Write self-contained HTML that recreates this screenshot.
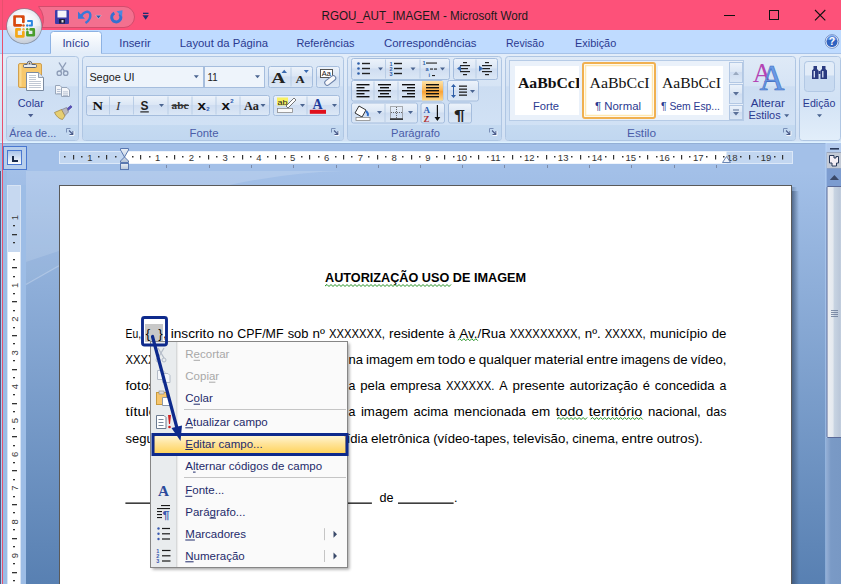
<!DOCTYPE html>
<html><head><meta charset="utf-8"><title>RGOU_AUT_IMAGEM - Microsoft Word</title>
<style>html,body{margin:0;padding:0;width:841px;height:584px;overflow:hidden;background:#A9C5EC;font-family:"Liberation Sans",sans-serif}</style>
</head><body>
<svg width="841" height="584" viewBox="0 0 841 584" style="position:absolute;left:0;top:0"><defs>
<linearGradient id="gRib" x1="0" y1="0" x2="0" y2="1"><stop offset="0" stop-color="#E3EDF9"/><stop offset="1" stop-color="#D2E1F4"/></linearGradient>
<linearGradient id="gGrp" x1="0" y1="0" x2="0" y2="1"><stop offset="0" stop-color="#DFEAF7"/><stop offset=".35" stop-color="#D6E4F5"/><stop offset=".36" stop-color="#CCDDF2"/><stop offset="1" stop-color="#D3E3F6"/></linearGradient>
<linearGradient id="gBand" x1="0" y1="0" x2="0" y2="1"><stop offset="0" stop-color="#C5DAF1"/><stop offset="1" stop-color="#C1D7F0"/></linearGradient>
<linearGradient id="gBtn" x1="0" y1="0" x2="0" y2="1"><stop offset="0" stop-color="#EDF3FB"/><stop offset=".45" stop-color="#DCE7F5"/><stop offset=".5" stop-color="#CFDDF1"/><stop offset="1" stop-color="#DCE8F6"/></linearGradient>
<linearGradient id="gOrg" x1="0" y1="0" x2="0" y2="1"><stop offset="0" stop-color="#FDE3A8"/><stop offset=".45" stop-color="#FBB856"/><stop offset=".55" stop-color="#F9A136"/><stop offset="1" stop-color="#FDDA8E"/></linearGradient>
<linearGradient id="gTab" x1="0" y1="0" x2="0" y2="1"><stop offset="0" stop-color="#FFFFFF"/><stop offset="1" stop-color="#E2ECF8"/></linearGradient>
<linearGradient id="gDoc" x1="0" y1="0" x2="0" y2="1"><stop offset="0" stop-color="#A3C0E8"/><stop offset="1" stop-color="#5880B2"/></linearGradient>
<linearGradient id="gMenuHi" x1="0" y1="0" x2="0" y2="1"><stop offset="0" stop-color="#FFF6D6"/><stop offset=".45" stop-color="#FFE49A"/><stop offset="1" stop-color="#FFD35A"/></linearGradient>
<linearGradient id="gThumb" x1="0" y1="0" x2="1" y2="0"><stop offset="0" stop-color="#EEF0F3"/><stop offset=".4" stop-color="#E4E9EF"/><stop offset=".48" stop-color="#C8D4E2"/><stop offset=".88" stop-color="#BAC7D9"/><stop offset="1" stop-color="#E2E9F2"/></linearGradient>
<radialGradient id="gOB" cx="45%" cy="30%" r="75%"><stop offset="0" stop-color="#FFFFFF"/><stop offset=".55" stop-color="#E8ECF2"/><stop offset="1" stop-color="#BFC7D3"/></radialGradient>
<linearGradient id="gEd" x1="0" y1="0" x2="0" y2="1"><stop offset="0" stop-color="#DCE8F6"/><stop offset=".5" stop-color="#D2E2F5"/><stop offset="1" stop-color="#E2EEFA"/></linearGradient>
<filter id="fsh" x="-10%" y="-10%" width="130%" height="130%"><feGaussianBlur stdDeviation="1.5"/></filter>
</defs>
<rect x="0" y="0" width="841" height="584" fill="#A9C5EC" />
<rect x="0" y="0" width="841" height="30" fill="#FD5179" />
<path d="M38.5 6.5 H124 A10.5 10.5 0 0 1 124 27.5 H42 A22 22 0 0 0 38.5 6.5Z" fill="#F3708F" stroke="#D24C6C" stroke-width="1"/>
<rect x="55" y="10" width="14" height="14" fill="#3B3BA8" rx="1"/>
<rect x="57.5" y="10.5" width="9" height="7" fill="#F4F4FA" />
<rect x="59" y="19" width="6" height="4.5" fill="#1C1C3C" />
<rect x="61.5" y="20" width="2" height="2.5" fill="#DDDDDD" />
<path d="M78 11.5 L78 18.8 L85 18.8Z" fill="#3A78D8"/>
<path d="M81 16.5 C83.5 11.5 89.5 10 90.3 14.5 C90.8 18 88.5 21 85.5 23" fill="none" stroke="#3A78D8" stroke-width="2.4"/>
<path d="M95.7 15.3 H101.3 L98.5 18.8Z" fill="#2C5CA8" stroke="#FFFFFF" stroke-width=".5" stroke-opacity=".6"/>
<path d="M114.4 13.1 A4.6 4.6 0 1 0 119.55 14.05" fill="none" stroke="#3470D0" stroke-width="3"/>
<path d="M116.5 11.2 L122.5 10.3 L122 16.8Z" fill="#4A88E0"/>
<rect x="143" y="12.7" width="5.5" height="1.3" fill="#1F2E70" />
<path d="M142.5 15.3 L148.8 15.3 L145.65 19.8Z" fill="#1F2E70"/>
<text x="321.5" y="19.6" font-size="12" fill="#1A1A1A" font-weight="normal" text-anchor="start" font-family="Liberation Sans" textLength="206.5" lengthAdjust="spacingAndGlyphs" >RGOU_AUT_IMAGEM - Microsoft Word</text>
<rect x="724" y="15" width="11" height="1" fill="#111" />
<rect x="769.5" y="10.5" width="9" height="9" fill="none" stroke="#111" stroke-width="1"/>
<path d="M815 10 L825.3 20.3 M825.3 10 L815 20.3" stroke="#111" stroke-width="1.1"/>
<rect x="0" y="30" width="841" height="24" fill="#BFDBFF" />
<path d="M50.5 54 V34.5 A3 3 0 0 1 53.5 31.5 H98.5 A3 3 0 0 1 101.5 34.5 V54" fill="url(#gTab)" stroke="#8DB2E3" stroke-width="1"/>
<text x="62.4" y="46.7" font-size="11.5" fill="#2A3990" font-weight="normal" text-anchor="start" font-family="Liberation Sans" textLength="26.8" lengthAdjust="spacingAndGlyphs" >Início</text>
<text x="119.3" y="46.7" font-size="11.5" fill="#2A3990" font-weight="normal" text-anchor="start" font-family="Liberation Sans" textLength="31.4" lengthAdjust="spacingAndGlyphs" >Inserir</text>
<text x="179.8" y="46.7" font-size="11.5" fill="#2A3990" font-weight="normal" text-anchor="start" font-family="Liberation Sans" textLength="88.2" lengthAdjust="spacingAndGlyphs" >Layout da Página</text>
<text x="296.4" y="46.7" font-size="11.5" fill="#2A3990" font-weight="normal" text-anchor="start" font-family="Liberation Sans" textLength="58.1" lengthAdjust="spacingAndGlyphs" >Referências</text>
<text x="384" y="46.7" font-size="11.5" fill="#2A3990" font-weight="normal" text-anchor="start" font-family="Liberation Sans" textLength="92.5" lengthAdjust="spacingAndGlyphs" >Correspondências</text>
<text x="506" y="46.7" font-size="11.5" fill="#2A3990" font-weight="normal" text-anchor="start" font-family="Liberation Sans" textLength="38" lengthAdjust="spacingAndGlyphs" >Revisão</text>
<text x="575" y="46.7" font-size="11.5" fill="#2A3990" font-weight="normal" text-anchor="start" font-family="Liberation Sans" textLength="41.2" lengthAdjust="spacingAndGlyphs" >Exibição</text>
<circle cx="832" cy="41.5" r="6.8" fill="#FFFFFF" stroke="#5A7AB8" stroke-width=".8"/>
<circle cx="832" cy="41.5" r="5.6" fill="#2F62C0"/>
<path d="M827 40 A5 5 0 0 1 837 40Z" fill="#6A9AE8" opacity=".7"/>
<text x="832" y="45.3" font-size="10.5" fill="#fff" font-weight="bold" text-anchor="middle" font-family="Liberation Sans" >?</text>
<rect x="0" y="53.5" width="841" height="89" fill="url(#gRib)" />
<rect x="0" y="53" width="51" height="1" fill="#A6C2E8" />
<rect x="101" y="53" width="740" height="1" fill="#A6C2E8" />
<rect x="6.5" y="56.5" width="72.0" height="84.0" rx="3" fill="url(#gGrp)" stroke="#AFC6E3" stroke-width="1"/>
<path d="M7.0 125 H78.0 V137.5 A2.5 2.5 0 0 1 75.5 140.0 H9.5 A2.5 2.5 0 0 1 7.0 137.5Z" fill="url(#gBand)"/>
<text x="9.2" y="137" font-size="11" fill="#4A5CA8" font-weight="normal" text-anchor="start" font-family="Liberation Sans" textLength="47" lengthAdjust="spacingAndGlyphs" >Área de...</text>
<path d="M70.5 128.5 H66.5 V132.5" stroke="#7A90B8" stroke-width="1" fill="none"/>
<path d="M69.0 130.5 L73.0 134.5 M73.0 131 V134.5 H69.5" stroke="#4A5A88" stroke-width="1.1" fill="none"/>
<path d="M74.0 131 V135.5 H69.5" stroke="#FFFFFF" stroke-width="1" fill="none" opacity=".8"/>
<rect x="82.5" y="56.5" width="261.0" height="84.0" rx="3" fill="url(#gGrp)" stroke="#AFC6E3" stroke-width="1"/>
<path d="M83.0 125 H343.0 V137.5 A2.5 2.5 0 0 1 340.5 140.0 H85.5 A2.5 2.5 0 0 1 83.0 137.5Z" fill="url(#gBand)"/>
<text x="189.5" y="137" font-size="11" fill="#4A5CA8" font-weight="normal" text-anchor="start" font-family="Liberation Sans" textLength="29" lengthAdjust="spacingAndGlyphs" >Fonte</text>
<path d="M335.5 128.5 H331.5 V132.5" stroke="#7A90B8" stroke-width="1" fill="none"/>
<path d="M334.0 130.5 L338.0 134.5 M338.0 131 V134.5 H334.5" stroke="#4A5A88" stroke-width="1.1" fill="none"/>
<path d="M339.0 131 V135.5 H334.5" stroke="#FFFFFF" stroke-width="1" fill="none" opacity=".8"/>
<rect x="347.5" y="56.5" width="154.0" height="84.0" rx="3" fill="url(#gGrp)" stroke="#AFC6E3" stroke-width="1"/>
<path d="M348.0 125 H501.0 V137.5 A2.5 2.5 0 0 1 498.5 140.0 H350.5 A2.5 2.5 0 0 1 348.0 137.5Z" fill="url(#gBand)"/>
<text x="391.0" y="137" font-size="11" fill="#4A5CA8" font-weight="normal" text-anchor="start" font-family="Liberation Sans" textLength="49" lengthAdjust="spacingAndGlyphs" >Parágrafo</text>
<path d="M493.5 128.5 H489.5 V132.5" stroke="#7A90B8" stroke-width="1" fill="none"/>
<path d="M492.0 130.5 L496.0 134.5 M496.0 131 V134.5 H492.5" stroke="#4A5A88" stroke-width="1.1" fill="none"/>
<path d="M497.0 131 V135.5 H492.5" stroke="#FFFFFF" stroke-width="1" fill="none" opacity=".8"/>
<rect x="505.5" y="56.5" width="290.0" height="84.0" rx="3" fill="url(#gGrp)" stroke="#AFC6E3" stroke-width="1"/>
<path d="M506.0 125 H795.0 V137.5 A2.5 2.5 0 0 1 792.5 140.0 H508.5 A2.5 2.5 0 0 1 506.0 137.5Z" fill="url(#gBand)"/>
<text x="627" y="137" font-size="11" fill="#4A5CA8" font-weight="normal" text-anchor="start" font-family="Liberation Sans" textLength="29" lengthAdjust="spacingAndGlyphs" >Estilo</text>
<path d="M787.5 128.5 H783.5 V132.5" stroke="#7A90B8" stroke-width="1" fill="none"/>
<path d="M786.0 130.5 L790.0 134.5 M790.0 131 V134.5 H786.5" stroke="#4A5A88" stroke-width="1.1" fill="none"/>
<path d="M791.0 131 V135.5 H786.5" stroke="#FFFFFF" stroke-width="1" fill="none" opacity=".8"/>
<rect x="799.5" y="56.5" width="41.0" height="84.0" rx="3" fill="url(#gGrp)" stroke="#AFC6E3" stroke-width="1"/>
<rect x="800.0" y="57.0" width="40.0" height="83.0" rx="3" fill="url(#gEd)"/>
<rect x="18.5" y="63.5" width="23" height="24" rx="1.5" fill="#F7C86C" stroke="#D0A050" stroke-width="1"/>
<rect x="19.5" y="64.5" width="2" height="22" fill="#FBDA90" />
<circle cx="29.5" cy="63.6" r="2.3" fill="#E8ECF0" stroke="#5A6478" stroke-width="1"/>
<rect x="23.5" y="64.5" width="13" height="3" rx="1" fill="#E8ECF0" stroke="#5A6478" stroke-width="1"/>
<rect x="27.3" y="64.2" width="4.4" height="1.6" fill="#E8ECF0" />
<circle cx="29.5" cy="63.4" r=".9" fill="#6A5030"/>
<path d="M26.5 72.5 H38.5 L43.5 77.5 V90.5 H26.5Z" fill="#FFFFFF" stroke="#7A8AA0" stroke-width="1"/>
<path d="M38.5 72.5 V77.5 H43.5" fill="#DDE4EE" stroke="#7A8AA0" stroke-width=".8"/>
<rect x="29" y="75" width="7" height="1" fill="#C0C8D4" />
<rect x="29" y="77" width="7" height="1" fill="#C0C8D4" />
<rect x="29" y="79" width="7" height="1" fill="#C0C8D4" />
<rect x="29" y="81" width="12" height="1" fill="#C0C8D4" />
<rect x="29" y="83" width="12" height="1" fill="#C0C8D4" />
<rect x="29" y="85" width="12" height="1" fill="#C0C8D4" />
<rect x="29" y="87" width="12" height="1" fill="#C0C8D4" />
<text x="17.7" y="106.7" font-size="11.5" fill="#2A3990" font-weight="normal" text-anchor="start" font-family="Liberation Sans" textLength="26.1" lengthAdjust="spacingAndGlyphs" >Colar</text>
<path d="M28 114 H33.4 L30.7 117.2Z" fill="#4A5E90"/>
<path d="M59 62.5 L65 72 M66 62.5 L60 72" stroke="#8E9DB8" stroke-width="1.4" fill="none"/>
<circle cx="59.3" cy="73.2" r="2.2" fill="none" stroke="#8E9DB8" stroke-width="1.3"/><circle cx="65.7" cy="73.2" r="2.2" fill="none" stroke="#8E9DB8" stroke-width="1.3"/>
<path d="M55.5 85.5 H60 L62 87.5 V94 H55.5Z" fill="#F4F6FA" stroke="#98A6BA" stroke-width="1"/>
<path d="M61.5 87.5 H67 L69.5 90 V96.5 H61.5Z" fill="#F4F6FA" stroke="#98A6BA" stroke-width="1"/>
<rect x="57" y="89" width="3.5" height="0.8" fill="#A8B4C8" />
<rect x="57" y="91" width="3.5" height="0.8" fill="#A8B4C8" />
<rect x="57" y="93" width="3.5" height="0.8" fill="#A8B4C8" />
<rect x="63" y="91.5" width="5" height="0.8" fill="#A8B4C8" />
<rect x="63" y="93.5" width="5" height="0.8" fill="#A8B4C8" />
<rect x="63" y="95" width="5" height="0.8" fill="#A8B4C8" />
<path d="M70.8 105.5 L72 107 L67.5 111 L66 109.5Z" fill="#5A50C0" stroke="#3A3490" stroke-width=".6"/>
<path d="M61 110 L66.5 107.5 L68.5 112 L64.5 116Z" fill="#B8B8C0" stroke="#707080" stroke-width=".6"/>
<path d="M54.5 112.5 L61.5 109.5 L65 116 L62.5 119.5 C59 119 56 116 54.5 112.5Z" fill="#E6CE70" stroke="#9A8040" stroke-width=".7"/>
<rect x="86.5" y="66.5" width="117" height="21" fill="#EEF4FB" stroke="#A5BDDD" stroke-width="1"/>
<rect x="204.5" y="66.5" width="60" height="21" fill="#EEF4FB" stroke="#A5BDDD" stroke-width="1"/>
<text x="89.4" y="80.9" font-size="11.5" fill="#1A1A1A" font-weight="normal" text-anchor="start" font-family="Liberation Sans" textLength="45.2" lengthAdjust="spacingAndGlyphs" >Segoe UI</text>
<text x="207.5" y="80.9" font-size="11.5" fill="#1A1A1A" font-weight="normal" text-anchor="start" font-family="Liberation Sans" textLength="10.1" lengthAdjust="spacingAndGlyphs" >11</text>
<path d="M193.8 75.2 H198.8 L196.3 78.2Z" fill="#4A6490"/>
<path d="M255 75.2 H260 L257.5 78.2Z" fill="#4A6490"/>
<rect x="268.5" y="66.5" width="44.0" height="21.0" rx="2" fill="url(#gBtn)" stroke="#A5BDDD" stroke-width="1"/>
<rect x="290.5" y="67.5" width="1" height="19.0" fill="#B9CDE6" />
<text x="271.3" y="83.2" font-size="15.5" fill="#222" font-weight="bold" text-anchor="start" font-family="Liberation Serif" textLength="14.2" lengthAdjust="spacingAndGlyphs" >A</text>
<path d="M281.5 73 L284.2 69.8 L287 73Z" fill="#3A6AB0"/>
<text x="295.5" y="83.2" font-size="11" fill="#222" font-weight="bold" text-anchor="start" font-family="Liberation Serif" textLength="9.3" lengthAdjust="spacingAndGlyphs" >A</text>
<path d="M303.8 70 H308.8 L306.3 73Z" fill="#3A6AB0"/>
<rect x="316.5" y="66.5" width="23.0" height="21.0" rx="2" fill="url(#gBtn)" stroke="#A5BDDD" stroke-width="1"/>
<rect x="320.5" y="69.5" width="12" height="8" fill="#fff" stroke="#444" stroke-width=".9"/>
<text x="321.8" y="76.3" font-size="7" fill="#111" font-weight="normal" text-anchor="start" font-family="Liberation Sans" textLength="9" lengthAdjust="spacingAndGlyphs" >Aa</text>
<rect x="324" y="78" width="12.5" height="5" rx="2.3" fill="#F8F8FA" stroke="#6A80A8" stroke-width="1" transform="rotate(-38 330.2 80.5)"/>
<rect x="86.5" y="95.5" width="183.0" height="20.0" rx="2" fill="url(#gBtn)" stroke="#A5BDDD" stroke-width="1"/>
<rect x="109" y="96.5" width="1" height="18.0" fill="#B9CDE6" />
<rect x="133" y="96.5" width="1" height="18.0" fill="#B9CDE6" />
<rect x="167.5" y="96.5" width="1" height="18.0" fill="#B9CDE6" />
<rect x="191.5" y="96.5" width="1" height="18.0" fill="#B9CDE6" />
<rect x="215.5" y="96.5" width="1" height="18.0" fill="#B9CDE6" />
<rect x="239.5" y="96.5" width="1" height="18.0" fill="#B9CDE6" />
<text x="92.5" y="109.6" font-size="12.5" fill="#111" font-weight="bold" text-anchor="start" font-family="Liberation Serif" textLength="10.5" lengthAdjust="spacingAndGlyphs" >N</text>
<text x="116" y="109.6" font-size="13" fill="#333" font-weight="normal" text-anchor="start" font-family="Liberation Serif" font-style="italic">I</text>
<text x="140.5" y="109.6" font-size="12.5" fill="#222" font-weight="bold" text-anchor="start" font-family="Liberation Sans" textLength="8" lengthAdjust="spacingAndGlyphs" >S</text>
<rect x="140.3" y="111.3" width="8.5" height="1.2" fill="#222" />
<path d="M159 104 H164 L161.5 107Z" fill="#4A6490"/>
<text x="171.5" y="109.3" font-size="10.5" fill="#333" font-weight="bold" text-anchor="start" font-family="Liberation Serif" textLength="17" lengthAdjust="spacingAndGlyphs" >abc</text>
<rect x="171.5" y="105" width="17.5" height="1" fill="#333" />
<text x="197.5" y="109.6" font-size="13" fill="#111" font-weight="bold" text-anchor="start" font-family="Liberation Sans" textLength="8.5" lengthAdjust="spacingAndGlyphs" >x</text>
<text x="206.3" y="111.2" font-size="6" fill="#2A5AB0" font-weight="bold" text-anchor="start" font-family="Liberation Sans" >2</text>
<text x="221.5" y="109.6" font-size="13" fill="#111" font-weight="bold" text-anchor="start" font-family="Liberation Sans" textLength="8.5" lengthAdjust="spacingAndGlyphs" >x</text>
<text x="230.3" y="102.5" font-size="6" fill="#2A5AB0" font-weight="bold" text-anchor="start" font-family="Liberation Sans" >2</text>
<text x="244" y="110" font-size="12" fill="#222" font-weight="bold" text-anchor="start" font-family="Liberation Serif" textLength="15" lengthAdjust="spacingAndGlyphs" >Aa</text>
<path d="M260.5 104 H265.5 L263.0 107Z" fill="#4A6490"/>
<rect x="273.5" y="95.5" width="66.0" height="20.0" rx="2" fill="url(#gBtn)" stroke="#A5BDDD" stroke-width="1"/>
<rect x="306.5" y="96.5" width="1" height="18.0" fill="#B9CDE6" />
<rect x="277" y="97.5" width="11" height="8" fill="#F8F060" />
<text x="277.5" y="104.5" font-size="8" fill="#222" font-weight="normal" text-anchor="start" font-family="Liberation Sans" textLength="10" lengthAdjust="spacingAndGlyphs" >ab</text>
<path d="M286 106 L294 98 L296 100 L288 108Z" fill="#fff" stroke="#555" stroke-width=".8"/>
<rect x="277.5" y="108.5" width="15" height="4" fill="#FAFAFA" stroke="#8A8A8A" stroke-width=".8"/>
<path d="M300 104 H305 L302.5 107Z" fill="#4A6490"/>
<text x="312.5" y="108.5" font-size="14" fill="#1E3C9C" font-weight="bold" text-anchor="start" font-family="Liberation Serif" >A</text>
<rect x="309.8" y="109.8" width="16.2" height="4" fill="#E0101C" />
<path d="M332 104 H337 L334.5 107Z" fill="#4A6490"/>
<rect x="351.5" y="58.5" width="98.0" height="21.0" rx="2" fill="url(#gBtn)" stroke="#A5BDDD" stroke-width="1"/>
<rect x="385" y="59.5" width="1" height="19.0" fill="#B9CDE6" />
<rect x="419.5" y="59.5" width="1" height="19.0" fill="#B9CDE6" />
<rect x="453.5" y="58.5" width="44.0" height="21.0" rx="2" fill="url(#gBtn)" stroke="#A5BDDD" stroke-width="1"/>
<rect x="475.5" y="59.5" width="1" height="19.0" fill="#B9CDE6" />
<rect x="351.5" y="80.5" width="91.5" height="20.5" rx="2" fill="url(#gBtn)" stroke="#A5BDDD" stroke-width="1"/>
<rect x="373.5" y="81.5" width="1" height="18.5" fill="#B9CDE6" />
<rect x="397.5" y="81.5" width="1" height="18.5" fill="#B9CDE6" />
<rect x="422" y="81" width="21" height="19.5" fill="url(#gOrg)"/>
<rect x="447.5" y="80.5" width="31.0" height="20.5" rx="2" fill="url(#gBtn)" stroke="#A5BDDD" stroke-width="1"/>
<rect x="351.5" y="103" width="66.0" height="20" rx="2" fill="url(#gBtn)" stroke="#A5BDDD" stroke-width="1"/>
<rect x="384.5" y="104" width="1" height="18" fill="#B9CDE6" />
<rect x="421" y="103" width="23.5" height="20" rx="2" fill="url(#gBtn)" stroke="#A5BDDD" stroke-width="1"/>
<rect x="448.5" y="103" width="23.0" height="20" rx="2" fill="url(#gBtn)" stroke="#A5BDDD" stroke-width="1"/>
<circle cx="358.5" cy="63.5" r="1.3" fill="#2F5FA8"/>
<rect x="362" y="62.8" width="8" height="1.4" fill="#222" />
<circle cx="358.5" cy="68.5" r="1.3" fill="#2F5FA8"/>
<rect x="362" y="67.8" width="8" height="1.4" fill="#222" />
<circle cx="358.5" cy="73.5" r="1.3" fill="#2F5FA8"/>
<rect x="362" y="72.8" width="8" height="1.4" fill="#222" />
<path d="M378 67.5 H383 L380.5 70.5Z" fill="#4A6490"/>
<text x="389.5" y="65.8" font-size="5.5" fill="#2F5FA8" font-weight="bold" text-anchor="start" font-family="Liberation Sans" >1</text>
<rect x="394" y="62.8" width="8" height="1.4" fill="#222" />
<text x="389.5" y="70.8" font-size="5.5" fill="#2F5FA8" font-weight="bold" text-anchor="start" font-family="Liberation Sans" >2</text>
<rect x="394" y="67.8" width="8" height="1.4" fill="#222" />
<text x="389.5" y="75.8" font-size="5.5" fill="#2F5FA8" font-weight="bold" text-anchor="start" font-family="Liberation Sans" >3</text>
<rect x="394" y="72.8" width="8" height="1.4" fill="#222" />
<path d="M410.5 67.5 H415.5 L413.0 70.5Z" fill="#4A6490"/>
<text x="422.5" y="64.5" font-size="5.5" fill="#2F5FA8" font-weight="bold" text-anchor="start" font-family="Liberation Sans" >1</text>
<rect x="426" y="62.5" width="11" height="1.1" fill="#222" />
<text x="425.5" y="70.5" font-size="5.5" fill="#2F5FA8" font-weight="bold" text-anchor="start" font-family="Liberation Sans" >a</text>
<rect x="430" y="68.5" width="3" height="1.1" fill="#222" />
<rect x="434" y="68.5" width="3" height="1.1" fill="#222" />
<text x="428.5" y="77" font-size="5.5" fill="#2F5FA8" font-weight="bold" text-anchor="start" font-family="Liberation Sans" >i</text>
<rect x="432" y="75" width="3" height="1.1" fill="#222" />
<path d="M440 67.5 H445 L442.5 70.5Z" fill="#4A6490"/>
<rect x="463" y="62" width="4" height="1.2" fill="#222" />
<rect x="460" y="65" width="10" height="1.2" fill="#222" />
<rect x="460" y="68" width="8" height="1.2" fill="#222" />
<rect x="460" y="71" width="10" height="1.2" fill="#222" />
<rect x="463" y="74" width="4" height="1.2" fill="#222" />
<path d="M457 68.5 L461 65.5 V71.5Z" fill="#3A6AB0"/>
<rect x="485" y="62" width="4" height="1.2" fill="#222" />
<rect x="482" y="65" width="10" height="1.2" fill="#222" />
<rect x="482" y="68" width="8" height="1.2" fill="#222" />
<rect x="482" y="71" width="10" height="1.2" fill="#222" />
<rect x="485" y="74" width="4" height="1.2" fill="#222" />
<path d="M483 68.5 L479 65.5 V71.5Z" fill="#3A6AB0"/>
<rect x="356.5" y="84" width="13" height="1.4" fill="#111" />
<rect x="356.5" y="87" width="8" height="1.4" fill="#111" />
<rect x="356.5" y="90" width="13" height="1.4" fill="#111" />
<rect x="356.5" y="93" width="8" height="1.4" fill="#111" />
<rect x="356.5" y="96" width="13" height="1.4" fill="#111" />
<rect x="378.0" y="84" width="13" height="1.4" fill="#111" />
<rect x="380.0" y="87" width="9" height="1.4" fill="#111" />
<rect x="378.0" y="90" width="13" height="1.4" fill="#111" />
<rect x="380.0" y="93" width="9" height="1.4" fill="#111" />
<rect x="378.0" y="96" width="13" height="1.4" fill="#111" />
<rect x="402" y="84" width="13" height="1.4" fill="#111" />
<rect x="407" y="87" width="8" height="1.4" fill="#111" />
<rect x="402" y="90" width="13" height="1.4" fill="#111" />
<rect x="407" y="93" width="8" height="1.4" fill="#111" />
<rect x="402" y="96" width="13" height="1.4" fill="#111" />
<rect x="426" y="84" width="13" height="1.4" fill="#111" />
<rect x="426" y="87" width="13" height="1.4" fill="#111" />
<rect x="426" y="90" width="13" height="1.4" fill="#111" />
<rect x="426" y="93" width="13" height="1.4" fill="#111" />
<rect x="426" y="96" width="13" height="1.4" fill="#111" />
<path d="M453.5 84 L451 87 H456Z M453.5 98 L451 95 H456Z" fill="#2F5FA8"/>
<rect x="453" y="86" width="1" height="10" fill="#2F5FA8" />
<rect x="459" y="85.5" width="8" height="1.3" fill="#222" />
<rect x="459" y="88.5" width="8" height="1.3" fill="#222" />
<rect x="459" y="91.5" width="8" height="1.3" fill="#222" />
<rect x="459" y="94.5" width="8" height="1.3" fill="#222" />
<path d="M470 90 H475 L472.5 93Z" fill="#4A6490"/>
<path d="M359 106 L366 110 L362 117 L355 113Z" fill="#fff" stroke="#333" stroke-width="1"/>
<path d="M366 111 Q369 114 367.5 116" stroke="#2F6CC8" stroke-width="2" fill="none"/>
<rect x="356" y="117.5" width="14" height="3" fill="#fff" stroke="#8A8A8A" stroke-width=".8"/>
<path d="M377 111 H382 L379.5 114Z" fill="#4A6490"/>
<rect x="390.5" y="106.5" width="12" height="12" fill="none" stroke="#666" stroke-width="1" stroke-dasharray="1 1"/>
<path d="M396.5 107 V118 M391 112.5 H402" stroke="#666" stroke-width="1" stroke-dasharray="1 1"/>
<rect x="390" y="118.5" width="13" height="1.3" fill="#111" />
<path d="M408 111 H413 L410.5 114Z" fill="#4A6490"/>
<text x="423.5" y="113" font-size="9" fill="#2A5AB0" font-weight="bold" text-anchor="start" font-family="Liberation Serif" >A</text>
<text x="423.5" y="121.8" font-size="9" fill="#B03030" font-weight="bold" text-anchor="start" font-family="Liberation Serif" >Z</text>
<rect x="436.8" y="105" width="1.2" height="15" fill="#111" />
<path d="M434.5 117 L437.4 121 L440.3 117Z" fill="#111"/>
<text x="454" y="119.5" font-size="14" fill="#222" font-weight="bold" text-anchor="start" font-family="Liberation Sans" textLength="11" lengthAdjust="spacingAndGlyphs" >¶</text>
<rect x="509.5" y="60.5" width="234" height="60" fill="#EAF1FA" stroke="#B6CBE6" stroke-width="1"/>
<rect x="515" y="66" width="64" height="49" fill="#FFFFFF" />
<rect x="583" y="63" width="72" height="55" rx="2" fill="#FFFFFF" stroke="#F0B050" stroke-width="2"/>
<rect x="585.5" y="65.5" width="67" height="50" fill="none" stroke="#FFE8B0" stroke-width="1.5"/>
<clipPath id="cpF"><rect x="515" y="60" width="64" height="60"/></clipPath>
<rect x="658" y="66" width="65" height="49" fill="#FFFFFF" />
<text x="518" y="87.5" font-size="14" fill="#111" font-weight="bold" text-anchor="start" font-family="Liberation Serif" textLength="63" lengthAdjust="spacingAndGlyphs" clip-path="url(#cpF)">AaBbCcI</text>
<text x="533" y="109.5" font-size="11.5" fill="#2A3990" font-weight="normal" text-anchor="start" font-family="Liberation Sans" textLength="26" lengthAdjust="spacingAndGlyphs" >Forte</text>
<text x="589.5" y="87.5" font-size="14" fill="#111" font-weight="normal" text-anchor="start" font-family="Liberation Serif" textLength="60" lengthAdjust="spacingAndGlyphs" >AaBbCcI</text>
<text x="595" y="109.5" font-size="11.5" fill="#2A3990" font-weight="normal" text-anchor="start" font-family="Liberation Sans" textLength="46" lengthAdjust="spacingAndGlyphs" >¶ Normal</text>
<text x="662" y="87.5" font-size="14" fill="#111" font-weight="normal" text-anchor="start" font-family="Liberation Serif" textLength="59" lengthAdjust="spacingAndGlyphs" >AaBbCcI</text>
<text x="661" y="109.5" font-size="11.5" fill="#2A3990" font-weight="normal" text-anchor="start" font-family="Liberation Sans" textLength="59" lengthAdjust="spacingAndGlyphs" >¶ Sem Esp...</text>
<rect x="729.5" y="62.5" width="13" height="20" fill="url(#gBtn)" stroke="#B3C8E4" stroke-width="1"/>
<rect x="729.5" y="84.5" width="13" height="19" fill="url(#gBtn)" stroke="#B3C8E4" stroke-width="1"/>
<rect x="729.5" y="105.5" width="13" height="14" fill="url(#gBtn)" stroke="#B3C8E4" stroke-width="1"/>
<path d="M733 75 H739 L736 71.5Z" fill="#9AAAC0"/>
<path d="M733 92 H739 L736 95.5Z" fill="#5A7098"/>
<rect x="733" y="109.5" width="6" height="1" fill="#5A7098" />
<path d="M733 112 H739 L736 115.5Z" fill="#5A7098"/>
<text x="752.8" y="81.5" font-size="27" fill="#B444B4" font-weight="normal" text-anchor="start" font-family="Liberation Serif" textLength="19" lengthAdjust="spacingAndGlyphs" >A</text>
<text x="759.5" y="89.6" font-size="36.5" fill="#6A9AE6" font-weight="normal" text-anchor="start" font-family="Liberation Serif" textLength="25" lengthAdjust="spacingAndGlyphs" stroke="#3A6CC0" stroke-width=".6">A</text>
<text x="750.8" y="106.8" font-size="11.5" fill="#2A3990" font-weight="normal" text-anchor="start" font-family="Liberation Sans" textLength="34.1" lengthAdjust="spacingAndGlyphs" >Alterar</text>
<text x="748.4" y="119.1" font-size="11.5" fill="#2A3990" font-weight="normal" text-anchor="start" font-family="Liberation Sans" textLength="32.3" lengthAdjust="spacingAndGlyphs" >Estilos</text>
<path d="M784.2 114.2 H789.2 L786.7 117.2Z" fill="#4A6490"/>
<rect x="804.5" y="61.5" width="30" height="30" rx="3" fill="#C9DBF1" stroke="#B2C8E4" stroke-width="1"/>
<path d="M805 64.5 A3 3 0 0 1 808 62 H831 A3 3 0 0 1 834 64.5 V75.5 H805Z" fill="#E2ECF8"/>
<path d="M813.5 66 h3.5 v3 l1.5 1.5 v8.5 h-6.5 v-8.5 l1.5 -1.5Z M822 66 h3.5 v3 l1.5 1.5 v8.5 h-6.5 v-8.5 l1.5 -1.5Z" fill="#2A3A80"/>
<rect x="818.5" y="71" width="2" height="3" fill="#2A3A80" />
<path d="M814.3 71 v6.5 M822.8 71 v6.5" stroke="#DDE6F8" stroke-width="1.3"/>
<text x="802.8" y="107" font-size="11.5" fill="#2A3990" font-weight="normal" text-anchor="start" font-family="Liberation Sans" textLength="32.5" lengthAdjust="spacingAndGlyphs" >Edição</text>
<path d="M817 114.2 H822 L819.5 117.2Z" fill="#4A6490"/>
<rect x="0" y="143" width="841" height="28" fill="#A3C0E8" />
<rect x="0" y="141.5" width="841" height="1.5" fill="#DDF2FF" />
<rect x="0" y="143" width="841" height="1" fill="#93AFD6" />
<rect x="2" y="0" width="1" height="584" fill="#E8506E" />
<linearGradient id="gTS" x1="0" y1="0" x2="0" y2="1"><stop offset="0" stop-color="#A8C3E8"/><stop offset="1" stop-color="#FFFFFF"/></linearGradient>
<rect x="3.5" y="146.5" width="23" height="23" fill="#B8CFEC" stroke="#4A78D0" stroke-width="1"/>
<rect x="7.5" y="150.5" width="14" height="14" fill="url(#gTS)" stroke="#4A78D0" stroke-width="1"/>
<rect x="12" y="156" width="2" height="6" fill="#1A2A48" />
<rect x="12" y="160" width="6" height="2" fill="#1A2A48" />
<rect x="59" y="151" width="734" height="13" fill="#C2D6F0" />
<rect x="59.5" y="151.5" width="733" height="12" fill="none" stroke="#DCE8F8" stroke-width="1"/>
<rect x="124.5" y="151.5" width="602" height="12" fill="#FFFFFF" />
<rect x="64" y="156" width="1.5" height="1.5" fill="#333" />
<rect x="73" y="155" width="1.2" height="4.5" fill="#333" />
<rect x="81" y="156" width="1.5" height="1.5" fill="#333" />
<text x="89.95" y="160.5" font-size="9.5" fill="#333333" font-weight="normal" text-anchor="middle" font-family="Liberation Sans" >1</text>
<rect x="98" y="156" width="1.5" height="1.5" fill="#333" />
<rect x="106" y="155" width="1.2" height="4.5" fill="#333" />
<rect x="115" y="156" width="1.5" height="1.5" fill="#333" />
<rect x="132" y="156" width="1.5" height="1.5" fill="#333" />
<rect x="140" y="155" width="1.2" height="4.5" fill="#333" />
<rect x="149" y="156" width="1.5" height="1.5" fill="#333" />
<text x="157.55" y="160.5" font-size="9.5" fill="#333333" font-weight="normal" text-anchor="middle" font-family="Liberation Sans" >1</text>
<rect x="166" y="156" width="1.5" height="1.5" fill="#333" />
<rect x="174" y="155" width="1.2" height="4.5" fill="#333" />
<rect x="182" y="156" width="1.5" height="1.5" fill="#333" />
<text x="191.35" y="160.5" font-size="9.5" fill="#333333" font-weight="normal" text-anchor="middle" font-family="Liberation Sans" >2</text>
<rect x="199" y="156" width="1.5" height="1.5" fill="#333" />
<rect x="208" y="155" width="1.2" height="4.5" fill="#333" />
<rect x="216" y="156" width="1.5" height="1.5" fill="#333" />
<text x="225.14999999999998" y="160.5" font-size="9.5" fill="#333333" font-weight="normal" text-anchor="middle" font-family="Liberation Sans" >3</text>
<rect x="233" y="156" width="1.5" height="1.5" fill="#333" />
<rect x="242" y="155" width="1.2" height="4.5" fill="#333" />
<rect x="250" y="156" width="1.5" height="1.5" fill="#333" />
<text x="258.95" y="160.5" font-size="9.5" fill="#333333" font-weight="normal" text-anchor="middle" font-family="Liberation Sans" >4</text>
<rect x="267" y="156" width="1.5" height="1.5" fill="#333" />
<rect x="275" y="155" width="1.2" height="4.5" fill="#333" />
<rect x="284" y="156" width="1.5" height="1.5" fill="#333" />
<text x="292.75" y="160.5" font-size="9.5" fill="#333333" font-weight="normal" text-anchor="middle" font-family="Liberation Sans" >5</text>
<rect x="301" y="156" width="1.5" height="1.5" fill="#333" />
<rect x="309" y="155" width="1.2" height="4.5" fill="#333" />
<rect x="318" y="156" width="1.5" height="1.5" fill="#333" />
<text x="326.54999999999995" y="160.5" font-size="9.5" fill="#333333" font-weight="normal" text-anchor="middle" font-family="Liberation Sans" >6</text>
<rect x="335" y="156" width="1.5" height="1.5" fill="#333" />
<rect x="343" y="155" width="1.2" height="4.5" fill="#333" />
<rect x="351" y="156" width="1.5" height="1.5" fill="#333" />
<text x="360.34999999999997" y="160.5" font-size="9.5" fill="#333333" font-weight="normal" text-anchor="middle" font-family="Liberation Sans" >7</text>
<rect x="368" y="156" width="1.5" height="1.5" fill="#333" />
<rect x="377" y="155" width="1.2" height="4.5" fill="#333" />
<rect x="385" y="156" width="1.5" height="1.5" fill="#333" />
<text x="394.15" y="160.5" font-size="9.5" fill="#333333" font-weight="normal" text-anchor="middle" font-family="Liberation Sans" >8</text>
<rect x="402" y="156" width="1.5" height="1.5" fill="#333" />
<rect x="411" y="155" width="1.2" height="4.5" fill="#333" />
<rect x="419" y="156" width="1.5" height="1.5" fill="#333" />
<text x="427.95" y="160.5" font-size="9.5" fill="#333333" font-weight="normal" text-anchor="middle" font-family="Liberation Sans" >9</text>
<rect x="436" y="156" width="1.5" height="1.5" fill="#333" />
<rect x="444" y="155" width="1.2" height="4.5" fill="#333" />
<rect x="453" y="156" width="1.5" height="1.5" fill="#333" />
<text x="461.75" y="160.5" font-size="9.5" fill="#333333" font-weight="normal" text-anchor="middle" font-family="Liberation Sans" >10</text>
<rect x="470" y="156" width="1.5" height="1.5" fill="#333" />
<rect x="478" y="155" width="1.2" height="4.5" fill="#333" />
<rect x="487" y="156" width="1.5" height="1.5" fill="#333" />
<text x="495.54999999999995" y="160.5" font-size="9.5" fill="#333333" font-weight="normal" text-anchor="middle" font-family="Liberation Sans" >11</text>
<rect x="503" y="156" width="1.5" height="1.5" fill="#333" />
<rect x="512" y="155" width="1.2" height="4.5" fill="#333" />
<rect x="520" y="156" width="1.5" height="1.5" fill="#333" />
<text x="529.3499999999999" y="160.5" font-size="9.5" fill="#333333" font-weight="normal" text-anchor="middle" font-family="Liberation Sans" >12</text>
<rect x="537" y="156" width="1.5" height="1.5" fill="#333" />
<rect x="546" y="155" width="1.2" height="4.5" fill="#333" />
<rect x="554" y="156" width="1.5" height="1.5" fill="#333" />
<text x="563.15" y="160.5" font-size="9.5" fill="#333333" font-weight="normal" text-anchor="middle" font-family="Liberation Sans" >13</text>
<rect x="571" y="156" width="1.5" height="1.5" fill="#333" />
<rect x="580" y="155" width="1.2" height="4.5" fill="#333" />
<rect x="588" y="156" width="1.5" height="1.5" fill="#333" />
<text x="596.9499999999999" y="160.5" font-size="9.5" fill="#333333" font-weight="normal" text-anchor="middle" font-family="Liberation Sans" >14</text>
<rect x="605" y="156" width="1.5" height="1.5" fill="#333" />
<rect x="613" y="155" width="1.2" height="4.5" fill="#333" />
<rect x="622" y="156" width="1.5" height="1.5" fill="#333" />
<text x="630.75" y="160.5" font-size="9.5" fill="#333333" font-weight="normal" text-anchor="middle" font-family="Liberation Sans" >15</text>
<rect x="639" y="156" width="1.5" height="1.5" fill="#333" />
<rect x="647" y="155" width="1.2" height="4.5" fill="#333" />
<rect x="656" y="156" width="1.5" height="1.5" fill="#333" />
<text x="664.55" y="160.5" font-size="9.5" fill="#333333" font-weight="normal" text-anchor="middle" font-family="Liberation Sans" >16</text>
<rect x="673" y="156" width="1.5" height="1.5" fill="#333" />
<rect x="681" y="155" width="1.2" height="4.5" fill="#333" />
<rect x="689" y="156" width="1.5" height="1.5" fill="#333" />
<text x="698.3499999999999" y="160.5" font-size="9.5" fill="#333333" font-weight="normal" text-anchor="middle" font-family="Liberation Sans" >17</text>
<rect x="706" y="156" width="1.5" height="1.5" fill="#333" />
<rect x="715" y="155" width="1.2" height="4.5" fill="#333" />
<rect x="723" y="156" width="1.5" height="1.5" fill="#333" />
<text x="732.15" y="160.5" font-size="9.5" fill="#333333" font-weight="normal" text-anchor="middle" font-family="Liberation Sans" >18</text>
<rect x="740" y="156" width="1.5" height="1.5" fill="#333" />
<rect x="749" y="155" width="1.2" height="4.5" fill="#333" />
<rect x="757" y="156" width="1.5" height="1.5" fill="#333" />
<text x="765.9499999999999" y="160.5" font-size="9.5" fill="#333333" font-weight="normal" text-anchor="middle" font-family="Liberation Sans" >19</text>
<rect x="774" y="156" width="1.5" height="1.5" fill="#333" />
<rect x="782" y="155" width="1.2" height="4.5" fill="#333" />
<rect x="166" y="165" width="1" height="3" fill="#7A8AA8" />
<rect x="209" y="165" width="1" height="3" fill="#7A8AA8" />
<rect x="251" y="165" width="1" height="3" fill="#7A8AA8" />
<rect x="293" y="165" width="1" height="3" fill="#7A8AA8" />
<rect x="336" y="165" width="1" height="3" fill="#7A8AA8" />
<rect x="378" y="165" width="1" height="3" fill="#7A8AA8" />
<rect x="420" y="165" width="1" height="3" fill="#7A8AA8" />
<rect x="462" y="165" width="1" height="3" fill="#7A8AA8" />
<rect x="504" y="165" width="1" height="3" fill="#7A8AA8" />
<rect x="547" y="165" width="1" height="3" fill="#7A8AA8" />
<rect x="589" y="165" width="1" height="3" fill="#7A8AA8" />
<rect x="631" y="165" width="1" height="3" fill="#7A8AA8" />
<rect x="674" y="165" width="1" height="3" fill="#7A8AA8" />
<rect x="716" y="165" width="1" height="3" fill="#7A8AA8" />
<linearGradient id="gIM" x1="0" y1="0" x2="0" y2="1"><stop offset="0" stop-color="#E8EEF6"/><stop offset="1" stop-color="#B8C6D8"/></linearGradient>
<path d="M120.5 148.5 H128.5 V150 L124.5 157 L120.5 150Z M124.5 157 L128.5 161 V162.5 H120.5 V161Z" fill="url(#gIM)" stroke="#5A78B0" stroke-width="1"/>
<rect x="120.5" y="163.5" width="8" height="6" fill="url(#gIM)" stroke="#5A78B0" stroke-width="1"/>
<path d="M722.5 162.5 L726.5 156.5 L730.5 162.5Z" fill="#F2F6FC" stroke="#6A86B4" stroke-width="1"/>
<rect x="0" y="171" width="827" height="413" fill="url(#gDoc)" />
<rect x="2" y="0" width="1" height="584" fill="#E8506E" />
<rect x="0" y="171" width="1" height="413" fill="#4A5A8A" />
<rect x="1" y="171" width="1" height="413" fill="#B4CDEE" />
<rect x="3" y="171" width="4" height="413" fill="#9BBCE6" />
<rect x="21" y="185" width="5" height="399" fill="#9DBDE6" />
<path d="M26 171 V262 L59 251 Q150 207 229.5 185 Q290 172 345 171Z" fill="#FFFFFF" opacity=".16"/>
<path d="M26 284.5 L59 265.8" stroke="#FFFFFF" stroke-width="1.2" opacity=".25"/>
<path d="M26 262 L59 251 V265.8 L26 284.5Z" fill="#FFFFFF" opacity=".05"/>
<rect x="7" y="185" width="14" height="399" fill="#FFFFFF" />
<rect x="7" y="185" width="14" height="67" fill="#C6D8F0" />
<rect x="7.5" y="185.5" width="13" height="400" fill="none" stroke="#D8E4F4" stroke-width="1"/>
<text x="0" y="0" font-size="9.5" fill="#3A3A3A" text-anchor="middle" font-family="Liberation Sans" transform="translate(17.5 217.7) rotate(-90)">1</text>
<rect x="13" y="225" width="2" height="1.3" fill="#333" />
<rect x="12" y="234" width="5" height="1.3" fill="#333" />
<rect x="13" y="242" width="2" height="1.3" fill="#333" />
<rect x="13" y="259" width="2" height="1.3" fill="#333" />
<rect x="12" y="267" width="5" height="1.3" fill="#333" />
<rect x="13" y="276" width="2" height="1.3" fill="#333" />
<text x="0" y="0" font-size="9.5" fill="#3A3A3A" text-anchor="middle" font-family="Liberation Sans" transform="translate(17.5 285.3) rotate(-90)">1</text>
<rect x="13" y="293" width="2" height="1.3" fill="#333" />
<rect x="12" y="301" width="5" height="1.3" fill="#333" />
<rect x="13" y="310" width="2" height="1.3" fill="#333" />
<text x="0" y="0" font-size="9.5" fill="#3A3A3A" text-anchor="middle" font-family="Liberation Sans" transform="translate(17.5 319.1) rotate(-90)">2</text>
<rect x="13" y="327" width="2" height="1.3" fill="#333" />
<rect x="12" y="335" width="5" height="1.3" fill="#333" />
<rect x="13" y="343" width="2" height="1.3" fill="#333" />
<text x="0" y="0" font-size="9.5" fill="#3A3A3A" text-anchor="middle" font-family="Liberation Sans" transform="translate(17.5 352.9) rotate(-90)">3</text>
<rect x="13" y="360" width="2" height="1.3" fill="#333" />
<rect x="12" y="369" width="5" height="1.3" fill="#333" />
<rect x="13" y="377" width="2" height="1.3" fill="#333" />
<text x="0" y="0" font-size="9.5" fill="#3A3A3A" text-anchor="middle" font-family="Liberation Sans" transform="translate(17.5 386.7) rotate(-90)">4</text>
<rect x="13" y="394" width="2" height="1.3" fill="#333" />
<rect x="12" y="403" width="5" height="1.3" fill="#333" />
<rect x="13" y="411" width="2" height="1.3" fill="#333" />
<text x="0" y="0" font-size="9.5" fill="#3A3A3A" text-anchor="middle" font-family="Liberation Sans" transform="translate(17.5 420.5) rotate(-90)">5</text>
<rect x="13" y="428" width="2" height="1.3" fill="#333" />
<rect x="12" y="436" width="5" height="1.3" fill="#333" />
<rect x="13" y="445" width="2" height="1.3" fill="#333" />
<text x="0" y="0" font-size="9.5" fill="#3A3A3A" text-anchor="middle" font-family="Liberation Sans" transform="translate(17.5 454.29999999999995) rotate(-90)">6</text>
<rect x="13" y="462" width="2" height="1.3" fill="#333" />
<rect x="12" y="470" width="5" height="1.3" fill="#333" />
<rect x="13" y="479" width="2" height="1.3" fill="#333" />
<text x="0" y="0" font-size="9.5" fill="#3A3A3A" text-anchor="middle" font-family="Liberation Sans" transform="translate(17.5 488.09999999999997) rotate(-90)">7</text>
<rect x="13" y="496" width="2" height="1.3" fill="#333" />
<rect x="12" y="504" width="5" height="1.3" fill="#333" />
<rect x="13" y="512" width="2" height="1.3" fill="#333" />
<text x="0" y="0" font-size="9.5" fill="#3A3A3A" text-anchor="middle" font-family="Liberation Sans" transform="translate(17.5 521.9) rotate(-90)">8</text>
<rect x="13" y="529" width="2" height="1.3" fill="#333" />
<rect x="12" y="538" width="5" height="1.3" fill="#333" />
<rect x="13" y="546" width="2" height="1.3" fill="#333" />
<text x="0" y="0" font-size="9.5" fill="#3A3A3A" text-anchor="middle" font-family="Liberation Sans" transform="translate(17.5 555.7) rotate(-90)">9</text>
<rect x="13" y="563" width="2" height="1.3" fill="#333" />
<rect x="12" y="572" width="5" height="1.3" fill="#333" />
<rect x="13" y="580" width="2" height="1.3" fill="#333" />
<linearGradient id="gSh" x1="0" y1="0" x2="1" y2="0"><stop offset="0" stop-color="#3A5070" stop-opacity=".75"/><stop offset="1" stop-color="#3A5070" stop-opacity="0"/></linearGradient>
<linearGradient id="gShT" x1="0" y1="0" x2="0" y2="1"><stop offset="0" stop-color="#3A5070" stop-opacity="0"/><stop offset="1" stop-color="#3A5070" stop-opacity=".75"/></linearGradient>
<rect x="792" y="191" width="7" height="393" fill="url(#gSh)" />
<rect x="792" y="187" width="5" height="4" fill="url(#gSh)" opacity=".5"/>
<rect x="59.5" y="185.5" width="732" height="420" fill="#FFFFFF" stroke="#5A5A5A" stroke-width="1"/>
<rect x="826" y="143" width="15" height="441" fill="#8FAFDB" />
<rect x="826" y="143" width="15" height="9" fill="#B3CBEE" />
<rect x="830" y="148" width="9" height="1.6" fill="#2A3A5A" />
<rect x="826.5" y="152.5" width="15" height="16" fill="#C3CAD6" stroke="#9AA6BC" stroke-width="1"/>
<path d="M829.5 155.5 H834 V158 H836 V156.5 H838.5 V163 H836.5 V166 H832 V163 H829.5Z" fill="#F4EEF4" stroke="#2A3A5A" stroke-width="1"/>
<rect x="826" y="168.5" width="15" height="18" fill="#7C9CD0" />
<path d="M829.8 180 H839 L834.4 175Z" fill="#3A4868"/>
<rect x="825.5" y="143" width="1" height="441" fill="#B8D4F8" />
<rect x="826.5" y="438" width="14.5" height="146" fill="#7A9AC6" />
<linearGradient id="gTrack" x1="0" y1="0" x2="1" y2="0"><stop offset="0" stop-color="#94AED4"/><stop offset=".3" stop-color="#7A9AC6"/><stop offset="1" stop-color="#7898C4"/></linearGradient>
<rect x="826.5" y="438" width="14.5" height="146" fill="url(#gTrack)" />
<rect x="827" y="186.5" width="15" height="251" rx="1" fill="url(#gThumb)" stroke="#5A6A98" stroke-width="1"/>
<rect x="831" y="310" width="7" height="0.8" fill="#6A7A98" />
<rect x="831" y="312" width="7" height="0.8" fill="#6A7A98" />
<rect x="831" y="314" width="7" height="0.8" fill="#6A7A98" />
<rect x="831" y="316" width="7" height="0.8" fill="#6A7A98" />
<rect x="145" y="324" width="18" height="18" fill="#C8C8C8" />
<text x="125.5" y="338" font-size="13.2" fill="#000000" font-weight="normal" text-anchor="start" font-family="Liberation Sans" textLength="15.5" lengthAdjust="spacingAndGlyphs" >Eu,</text>
<text x="145.7" y="338" font-size="13.2" fill="#000000" font-weight="normal" text-anchor="start" font-family="Liberation Sans" textLength="4.4" lengthAdjust="spacingAndGlyphs" >{</text>
<text x="158.3" y="338" font-size="13.2" fill="#000000" font-weight="normal" text-anchor="start" font-family="Liberation Sans" textLength="4.4" lengthAdjust="spacingAndGlyphs" >}</text>
<text x="163.2" y="338" font-size="13.2" fill="#000000" font-weight="normal" text-anchor="start" font-family="Liberation Sans" textLength="3" lengthAdjust="spacingAndGlyphs" >,</text>
<text x="170.7" y="338" font-size="13.2" fill="#000000" font-weight="normal" text-anchor="start" font-family="Liberation Sans" textLength="43.32" lengthAdjust="spacingAndGlyphs" >inscrito</text>
<text x="218.1" y="338" font-size="13.2" fill="#000000" font-weight="normal" text-anchor="start" font-family="Liberation Sans" textLength="15.15" lengthAdjust="spacingAndGlyphs" >no</text>
<text x="237.33" y="338" font-size="13.2" fill="#000000" font-weight="normal" text-anchor="start" font-family="Liberation Sans" textLength="46.22" lengthAdjust="spacingAndGlyphs" >CPF/MF</text>
<text x="287.64" y="338" font-size="13.2" fill="#000000" font-weight="normal" text-anchor="start" font-family="Liberation Sans" textLength="20.78" lengthAdjust="spacingAndGlyphs" >sob</text>
<text x="312.51" y="338" font-size="13.2" fill="#000000" font-weight="normal" text-anchor="start" font-family="Liberation Sans" textLength="12.31" lengthAdjust="spacingAndGlyphs" >nº</text>
<text x="328.91" y="338" font-size="13.2" fill="#000000" font-weight="normal" text-anchor="start" font-family="Liberation Sans" textLength="55.92" lengthAdjust="spacingAndGlyphs" >XXXXXXX,</text>
<text x="388.91" y="338" font-size="13.2" fill="#000000" font-weight="normal" text-anchor="start" font-family="Liberation Sans" textLength="55.41" lengthAdjust="spacingAndGlyphs" >residente</text>
<text x="448.4" y="338" font-size="13.2" fill="#000000" font-weight="normal" text-anchor="start" font-family="Liberation Sans" textLength="6.9" lengthAdjust="spacingAndGlyphs" >à</text>
<text x="459.39" y="338" font-size="13.2" fill="#000000" font-weight="normal" text-anchor="start" font-family="Liberation Sans" textLength="46.32" lengthAdjust="spacingAndGlyphs" >Av./Rua</text>
<text x="509.8" y="338" font-size="13.2" fill="#000000" font-weight="normal" text-anchor="start" font-family="Liberation Sans" textLength="70.86" lengthAdjust="spacingAndGlyphs" >XXXXXXXXX,</text>
<text x="584.75" y="338" font-size="13.2" fill="#000000" font-weight="normal" text-anchor="start" font-family="Liberation Sans" textLength="15.94" lengthAdjust="spacingAndGlyphs" >nº.</text>
<text x="604.77" y="338" font-size="13.2" fill="#000000" font-weight="normal" text-anchor="start" font-family="Liberation Sans" textLength="40.97" lengthAdjust="spacingAndGlyphs" >XXXXX,</text>
<text x="649.82" y="338" font-size="13.2" fill="#000000" font-weight="normal" text-anchor="start" font-family="Liberation Sans" textLength="57.76" lengthAdjust="spacingAndGlyphs" >município</text>
<text x="711.67" y="338" font-size="13.2" fill="#000000" font-weight="normal" text-anchor="start" font-family="Liberation Sans" textLength="14.73" lengthAdjust="spacingAndGlyphs" >de</text>
<text x="125.5" y="363.5" font-size="13.2" fill="#000000" font-weight="normal" text-anchor="start" font-family="Liberation Sans" textLength="70.86" lengthAdjust="spacingAndGlyphs" >XXXXXXXXX,</text>
<text x="125.5" y="389.6" font-size="13.2" fill="#000000" font-weight="normal" text-anchor="start" font-family="Liberation Sans" textLength="30.02" lengthAdjust="spacingAndGlyphs" >fotos</text>
<text x="158.78" y="389.6" font-size="13.2" fill="#000000" font-weight="normal" text-anchor="start" font-family="Liberation Sans" textLength="7.17" lengthAdjust="spacingAndGlyphs" >e</text>
<text x="125.5" y="416" font-size="13.2" fill="#000000" font-weight="normal" text-anchor="start" font-family="Liberation Sans" textLength="31.39" lengthAdjust="spacingAndGlyphs" >título</text>
<text x="160.15" y="416" font-size="13.2" fill="#000000" font-weight="normal" text-anchor="start" font-family="Liberation Sans" textLength="46.8" lengthAdjust="spacingAndGlyphs" >gratuito</text>
<text x="125.5" y="442.5" font-size="13.2" fill="#000000" font-weight="normal" text-anchor="start" font-family="Liberation Sans" textLength="55.63" lengthAdjust="spacingAndGlyphs" >seguintes</text>
<text x="348.5" y="363.5" font-size="13.2" fill="#000000" font-weight="normal" text-anchor="start" font-family="Liberation Sans" textLength="14.46" lengthAdjust="spacingAndGlyphs" >na</text>
<text x="365.98" y="363.5" font-size="13.2" fill="#000000" font-weight="normal" text-anchor="start" font-family="Liberation Sans" textLength="47.16" lengthAdjust="spacingAndGlyphs" >imagem</text>
<text x="416.17" y="363.5" font-size="13.2" fill="#000000" font-weight="normal" text-anchor="start" font-family="Liberation Sans" textLength="18.68" lengthAdjust="spacingAndGlyphs" >em</text>
<text x="437.88" y="363.5" font-size="13.2" fill="#000000" font-weight="normal" text-anchor="start" font-family="Liberation Sans" textLength="27.56" lengthAdjust="spacingAndGlyphs" >todo</text>
<text x="468.46" y="363.5" font-size="13.2" fill="#000000" font-weight="normal" text-anchor="start" font-family="Liberation Sans" textLength="7.17" lengthAdjust="spacingAndGlyphs" >e</text>
<text x="478.66" y="363.5" font-size="13.2" fill="#000000" font-weight="normal" text-anchor="start" font-family="Liberation Sans" textLength="52.63" lengthAdjust="spacingAndGlyphs" >qualquer</text>
<text x="534.32" y="363.5" font-size="13.2" fill="#000000" font-weight="normal" text-anchor="start" font-family="Liberation Sans" textLength="48.92" lengthAdjust="spacingAndGlyphs" >material</text>
<text x="586.26" y="363.5" font-size="13.2" fill="#000000" font-weight="normal" text-anchor="start" font-family="Liberation Sans" textLength="31.75" lengthAdjust="spacingAndGlyphs" >entre</text>
<text x="621.04" y="363.5" font-size="13.2" fill="#000000" font-weight="normal" text-anchor="start" font-family="Liberation Sans" textLength="48.84" lengthAdjust="spacingAndGlyphs" >imagens</text>
<text x="672.92" y="363.5" font-size="13.2" fill="#000000" font-weight="normal" text-anchor="start" font-family="Liberation Sans" textLength="14.73" lengthAdjust="spacingAndGlyphs" >de</text>
<text x="690.67" y="363.5" font-size="13.2" fill="#000000" font-weight="normal" text-anchor="start" font-family="Liberation Sans" textLength="35.73" lengthAdjust="spacingAndGlyphs" >vídeo,</text>
<text x="348.5" y="389.6" font-size="13.2" fill="#000000" font-weight="normal" text-anchor="start" font-family="Liberation Sans" textLength="6.9" lengthAdjust="spacingAndGlyphs" >a</text>
<text x="360.28" y="389.6" font-size="13.2" fill="#000000" font-weight="normal" text-anchor="start" font-family="Liberation Sans" textLength="24.93" lengthAdjust="spacingAndGlyphs" >pela</text>
<text x="390.09" y="389.6" font-size="13.2" fill="#000000" font-weight="normal" text-anchor="start" font-family="Liberation Sans" textLength="50.96" lengthAdjust="spacingAndGlyphs" >empresa</text>
<text x="445.94" y="389.6" font-size="13.2" fill="#000000" font-weight="normal" text-anchor="start" font-family="Liberation Sans" textLength="48.47" lengthAdjust="spacingAndGlyphs" >XXXXXX.</text>
<text x="499.29" y="389.6" font-size="13.2" fill="#000000" font-weight="normal" text-anchor="start" font-family="Liberation Sans" textLength="8.34" lengthAdjust="spacingAndGlyphs" >A</text>
<text x="512.51" y="389.6" font-size="13.2" fill="#000000" font-weight="normal" text-anchor="start" font-family="Liberation Sans" textLength="52.11" lengthAdjust="spacingAndGlyphs" >presente</text>
<text x="569.51" y="389.6" font-size="13.2" fill="#000000" font-weight="normal" text-anchor="start" font-family="Liberation Sans" textLength="68.36" lengthAdjust="spacingAndGlyphs" >autorização</text>
<text x="642.75" y="389.6" font-size="13.2" fill="#000000" font-weight="normal" text-anchor="start" font-family="Liberation Sans" textLength="7.17" lengthAdjust="spacingAndGlyphs" >é</text>
<text x="654.8" y="389.6" font-size="13.2" fill="#000000" font-weight="normal" text-anchor="start" font-family="Liberation Sans" textLength="59.82" lengthAdjust="spacingAndGlyphs" >concedida</text>
<text x="719.5" y="389.6" font-size="13.2" fill="#000000" font-weight="normal" text-anchor="start" font-family="Liberation Sans" textLength="6.9" lengthAdjust="spacingAndGlyphs" >a</text>
<text x="348.5" y="416" font-size="13.2" fill="#000000" font-weight="normal" text-anchor="start" font-family="Liberation Sans" textLength="6.9" lengthAdjust="spacingAndGlyphs" >a</text>
<text x="360.93" y="416" font-size="13.2" fill="#000000" font-weight="normal" text-anchor="start" font-family="Liberation Sans" textLength="47.16" lengthAdjust="spacingAndGlyphs" >imagem</text>
<text x="413.62" y="416" font-size="13.2" fill="#000000" font-weight="normal" text-anchor="start" font-family="Liberation Sans" textLength="34.69" lengthAdjust="spacingAndGlyphs" >acima</text>
<text x="453.84" y="416" font-size="13.2" fill="#000000" font-weight="normal" text-anchor="start" font-family="Liberation Sans" textLength="72.13" lengthAdjust="spacingAndGlyphs" >mencionada</text>
<text x="531.5" y="416" font-size="13.2" fill="#000000" font-weight="normal" text-anchor="start" font-family="Liberation Sans" textLength="18.68" lengthAdjust="spacingAndGlyphs" >em</text>
<text x="555.7" y="416" font-size="13.2" fill="#000000" font-weight="normal" text-anchor="start" font-family="Liberation Sans" textLength="27.56" lengthAdjust="spacingAndGlyphs" >todo</text>
<text x="588.79" y="416" font-size="13.2" fill="#000000" font-weight="normal" text-anchor="start" font-family="Liberation Sans" textLength="53.67" lengthAdjust="spacingAndGlyphs" >território</text>
<text x="647.99" y="416" font-size="13.2" fill="#000000" font-weight="normal" text-anchor="start" font-family="Liberation Sans" textLength="52.79" lengthAdjust="spacingAndGlyphs" >nacional,</text>
<text x="706.31" y="416" font-size="13.2" fill="#000000" font-weight="normal" text-anchor="start" font-family="Liberation Sans" textLength="20.09" lengthAdjust="spacingAndGlyphs" >das</text>
<text x="346.7" y="442.5" font-size="13.2" fill="#000000" font-weight="normal" text-anchor="start" font-family="Liberation Sans" textLength="21.05" lengthAdjust="spacingAndGlyphs" >ídia</text>
<text x="371.01" y="442.5" font-size="13.2" fill="#000000" font-weight="normal" text-anchor="start" font-family="Liberation Sans" textLength="58.92" lengthAdjust="spacingAndGlyphs" >eletrônica</text>
<text x="433.19" y="442.5" font-size="13.2" fill="#000000" font-weight="normal" text-anchor="start" font-family="Liberation Sans" textLength="76.58" lengthAdjust="spacingAndGlyphs" >(vídeo-tapes,</text>
<text x="513.02" y="442.5" font-size="13.2" fill="#000000" font-weight="normal" text-anchor="start" font-family="Liberation Sans" textLength="55.99" lengthAdjust="spacingAndGlyphs" >televisão,</text>
<text x="572.26" y="442.5" font-size="13.2" fill="#000000" font-weight="normal" text-anchor="start" font-family="Liberation Sans" textLength="46.12" lengthAdjust="spacingAndGlyphs" >cinema,</text>
<text x="621.64" y="442.5" font-size="13.2" fill="#000000" font-weight="normal" text-anchor="start" font-family="Liberation Sans" textLength="31.75" lengthAdjust="spacingAndGlyphs" >entre</text>
<text x="656.65" y="442.5" font-size="13.2" fill="#000000" font-weight="normal" text-anchor="start" font-family="Liberation Sans" textLength="46.21" lengthAdjust="spacingAndGlyphs" >outros).</text>
<rect x="125.4" y="502.5" width="246.5" height="1.3" fill="#111" />
<text x="379.4" y="501.5" font-size="13.2" fill="#000000" font-weight="normal" text-anchor="start" font-family="Liberation Sans" textLength="14" lengthAdjust="spacingAndGlyphs" >de</text>
<rect x="398" y="502.5" width="55.6" height="1.3" fill="#111" />
<text x="454" y="501.5" font-size="13.2" fill="#000000" font-weight="normal" text-anchor="start" font-family="Liberation Sans" textLength="3.5" lengthAdjust="spacingAndGlyphs" >.</text>
<text x="325" y="282.4" font-size="13.2" fill="#000" font-weight="bold" text-anchor="start" font-family="Liberation Sans" textLength="201" lengthAdjust="spacingAndGlyphs" >AUTORIZAÇÃO USO DE IMAGEM</text>
<path d="M325 286 L327 284.5 L329 286.5 L331 284.5 L333 286.5 L335 284.5 L337 286.5 L339 284.5 L341 286.5 L343 284.5 L345 286.5 L347 284.5 L349 286.5 L351 284.5 L353 286.5 L355 284.5 L357 286.5 L359 284.5 L361 286.5 L363 284.5 L365 286.5 L367 284.5 L369 286.5 L371 284.5 L373 286.5 L375 284.5 L377 286.5 L379 284.5 L381 286.5 L383 284.5 L385 286.5 L387 284.5 L389 286.5 L391 284.5 L393 286.5 L395 284.5 L397 286.5 L399 284.5 L401 286.5 L403 284.5 L405 286.5 L407 284.5 L409 286.5 L411 284.5 L413 286.5 L415 284.5 L417 286.5 L419 284.5 L421 286.5 L423 284.5 L425 286.5 L427 284.5 L429 286.5 L431 284.5 L433 286.5 L435 284.5 L437 286.5 L439 284.5 L441 286.5 L443 284.5 L445 286.5 L447 284.5 L449 286.5 L451 284.5" fill="none" stroke="#1F8F1F" stroke-width="1"/>
<path d="M457.8 340.2 L459.8 338.7 L461.8 340.7 L463.8 338.7 L465.8 340.7 L467.8 338.7 L469.8 340.7 L471.8 338.7 L473.8 340.7 L475.8 338.7 L477.8 340.7" fill="none" stroke="#1F8F1F" stroke-width="1"/>
<path d="M557.1 419 L559.1 417.5 L561.1 419.5 L563.1 417.5 L565.1 419.5 L567.1 417.5 L569.1 419.5 L571.1 417.5 L573.1 419.5 L575.1 417.5 L577.1 419.5 L579.1 417.5 L581.1 419.5 L583.1 417.5 L585.1 419.5 L587.1 417.5" fill="none" stroke="#1F8F1F" stroke-width="1"/>
<path d="M590.7 419 L592.7 417.5 L594.7 419.5 L596.7 417.5 L598.7 419.5 L600.7 417.5 L602.7 419.5 L604.7 417.5 L606.7 419.5 L608.7 417.5 L610.7 419.5 L612.7 417.5 L614.7 419.5 L616.7 417.5 L618.7 419.5 L620.7 417.5 L622.7 419.5 L624.7 417.5 L626.7 419.5 L628.7 417.5 L630.7 419.5 L632.7 417.5 L634.7 419.5 L636.7 417.5 L638.7 419.5 L640.7 417.5 L642.7 419.5" fill="none" stroke="#1F8F1F" stroke-width="1"/>
<rect x="152.5" y="343.5" width="197.0" height="226.0" fill="#000" opacity=".35" filter="url(#fsh)"/>
<rect x="150.5" y="341.5" width="197.0" height="226.0" fill="#FAFAFA" stroke="#868686" stroke-width="1"/>
<rect x="151.0" y="342.0" width="26" height="225.0" fill="#E9ECEE" />
<rect x="176.5" y="342.0" width="1" height="225.0" fill="#C5C5C5" />
<rect x="177.5" y="342.0" width="1" height="225.0" fill="#F5F5F5" />
<rect x="184" y="409" width="162" height="1" fill="#C5C5C5" />
<rect x="184" y="477" width="162" height="1" fill="#C5C5C5" />
<rect x="154" y="435.5" width="191.5" height="18" rx="2" fill="url(#gMenuHi)" stroke="#F0C060" stroke-width="1"/>
<text x="185.3" y="358.3" font-size="11.5" fill="#A8A8A8" font-weight="normal" text-anchor="start" font-family="Liberation Sans" >Recortar</text>
<rect x="193.6" y="359.8" width="6.4" height="1" fill="#A8A8A8" />
<text x="185.3" y="380.2" font-size="11.5" fill="#A8A8A8" font-weight="normal" text-anchor="start" font-family="Liberation Sans" >Copiar</text>
<rect x="209.0" y="381.7" width="6.4" height="1" fill="#A8A8A8" />
<text x="185.3" y="402.2" font-size="11.5" fill="#1E2A6A" font-weight="normal" text-anchor="start" font-family="Liberation Sans" >Colar</text>
<rect x="193.6" y="403.7" width="6.4" height="1" fill="#1E2A6A" />
<text x="185.3" y="425.8" font-size="11.5" fill="#1E2A6A" font-weight="normal" text-anchor="start" font-family="Liberation Sans" >Atualizar campo</text>
<rect x="185.3" y="427.3" width="7.7" height="1" fill="#1E2A6A" />
<text x="185.3" y="447.5" font-size="11.5" fill="#1E2A6A" font-weight="normal" text-anchor="start" font-family="Liberation Sans" >Editar campo...</text>
<rect x="185.3" y="449.0" width="7.7" height="1" fill="#1E2A6A" />
<text x="185.3" y="470.1" font-size="11.5" fill="#1E2A6A" font-weight="normal" text-anchor="start" font-family="Liberation Sans" >Alternar códigos de campo</text>
<rect x="193.0" y="471.6" width="2.6" height="1" fill="#1E2A6A" />
<text x="185.3" y="494.3" font-size="11.5" fill="#1E2A6A" font-weight="normal" text-anchor="start" font-family="Liberation Sans" >Fonte...</text>
<rect x="185.3" y="495.8" width="7.0" height="1" fill="#1E2A6A" />
<text x="185.3" y="516.1" font-size="11.5" fill="#1E2A6A" font-weight="normal" text-anchor="start" font-family="Liberation Sans" >Parágrafo...</text>
<rect x="209.6" y="517.6" width="6.4" height="1" fill="#1E2A6A" />
<text x="185.3" y="538" font-size="11.5" fill="#1E2A6A" font-weight="normal" text-anchor="start" font-family="Liberation Sans" >Marcadores</text>
<rect x="185.3" y="539.5" width="9.6" height="1" fill="#1E2A6A" />
<text x="185.3" y="559.8" font-size="11.5" fill="#1E2A6A" font-weight="normal" text-anchor="start" font-family="Liberation Sans" >Numeração</text>
<rect x="185.3" y="561.3" width="8.3" height="1" fill="#1E2A6A" />
<rect x="324" y="528.2" width="1" height="12" fill="#C5C5C5" />
<path d="M333.5 530.7 L337 534.2 L333.5 537.7Z" fill="#3A4A6A"/>
<rect x="324" y="550" width="1" height="12" fill="#C5C5C5" />
<path d="M333.5 552.5 L337 556 L333.5 559.5Z" fill="#3A4A6A"/>
<path d="M158 348 L164 358 M164 348 L158 358" stroke="#B4BCC8" stroke-width="1.3"/><circle cx="158" cy="360" r="2" fill="none" stroke="#B4BCC8"/><circle cx="164" cy="360" r="2" fill="none" stroke="#B4BCC8"/>
<path d="M157.5 370.5 H163 L165 372.5 V379.5 H157.5Z" fill="#F4F6FA" stroke="#B4BCC8"/><path d="M162.5 373.5 H168 L170 375.5 V382.5 H162.5Z" fill="#F4F6FA" stroke="#B4BCC8"/>
<rect x="156.5" y="392.5" width="10" height="12" fill="#F6C66E" stroke="#C89A3C"/><rect x="159" y="391" width="5" height="3" fill="#ddd" stroke="#888" stroke-width=".6"/><path d="M162.5 397.5 H168 L170 399.5 V405.5 H162.5Z" fill="#fff" stroke="#8A96A8"/>
<path d="M156.5 415.5 H164 L166 417.5 V428.5 H156.5Z" fill="#fff" stroke="#6A7A90"/>
<rect x="158.5" y="419" width="5" height="0.9" fill="#6A7A90" />
<rect x="158.5" y="422" width="5" height="0.9" fill="#6A7A90" />
<rect x="158.5" y="425" width="5" height="0.9" fill="#6A7A90" />
<path d="M168 415 L171 415 L170 424 L169 424Z" fill="#D02020"/><circle cx="169.5" cy="427" r="1.3" fill="#D02020"/>
<text x="158" y="495.5" font-size="15" fill="#2A4A9A" font-weight="bold" text-anchor="start" font-family="Liberation Serif" textLength="11" lengthAdjust="spacingAndGlyphs" >A</text>
<rect x="161" y="505" width="9" height="1.1" fill="#1A1A1A" />
<rect x="157" y="508" width="13" height="1.1" fill="#1A1A1A" />
<rect x="157" y="511" width="5" height="1.1" fill="#1A1A1A" />
<rect x="157" y="514" width="5" height="1.1" fill="#1A1A1A" />
<rect x="157" y="517" width="5" height="1.1" fill="#1A1A1A" />
<text x="162.5" y="518.5" font-size="10" fill="#3A5AB0" font-weight="bold" text-anchor="start" font-family="Liberation Sans" textLength="7" lengthAdjust="spacingAndGlyphs" >¶</text>
<circle cx="158.5" cy="528.5" r="1.2" fill="#3A5AB0"/>
<rect x="162" y="527.9" width="8" height="1.2" fill="#1A1A1A" />
<circle cx="158.5" cy="533.8" r="1.2" fill="#3A5AB0"/>
<rect x="162" y="533.1999999999999" width="8" height="1.2" fill="#1A1A1A" />
<circle cx="158.5" cy="539" r="1.2" fill="#3A5AB0"/>
<rect x="162" y="538.4" width="8" height="1.2" fill="#1A1A1A" />
<text x="156.3" y="552.7" font-size="5.5" fill="#3A5AB0" font-weight="bold" text-anchor="start" font-family="Liberation Sans" >1</text>
<rect x="162" y="549.9" width="8.5" height="1.2" fill="#1A1A1A" />
<text x="156.3" y="558.0" font-size="5.5" fill="#3A5AB0" font-weight="bold" text-anchor="start" font-family="Liberation Sans" >2</text>
<rect x="162" y="555.1999999999999" width="8.5" height="1.2" fill="#1A1A1A" />
<text x="156.3" y="563.2" font-size="5.5" fill="#3A5AB0" font-weight="bold" text-anchor="start" font-family="Liberation Sans" >3</text>
<rect x="162" y="560.4" width="8.5" height="1.2" fill="#1A1A1A" />
<rect x="142.5" y="317.5" width="24" height="27.5" rx="2" fill="none" stroke="#0E2A8C" stroke-width="2.9"/>
<rect x="153" y="434.5" width="194" height="20" fill="none" stroke="#0E2A8C" stroke-width="3"/>
<path d="M152.5 336.5 L177.5 430" stroke="#0E2A8C" stroke-width="3.2" stroke-linecap="round" fill="none"/>
<path d="M171.5 428 L180.5 441 L182 425.5Z" fill="#0E2A8C"/>
<circle cx="24.2" cy="26.2" r="18" fill="#7A8290" opacity=".8"/>
<circle cx="24.2" cy="26.2" r="17.2" fill="url(#gOB)"/>
<path d="M8 26 A16.5 16.5 0 0 1 40.5 26Z" fill="#ffffff" opacity=".35"/>
<path d="M23.35 22 V16.55 H14.55 V25.35 H20.8" fill="none" stroke="#D8480E" stroke-width="2.7" stroke-linejoin="round" stroke-linecap="round"/>
<path d="M28 20.9 H31.9 V25.4 H29.6" fill="none" stroke="#2A86E0" stroke-width="2" stroke-linejoin="round" stroke-linecap="round"/>
<path d="M19.8 29.45 H16.45 V36.35 H23.35 V32.2" fill="none" stroke="#F4A818" stroke-width="2.7" stroke-linejoin="round" stroke-linecap="round"/>
<path d="M27.45 32.2 V35.25 H33.75 V29.45 H30.6" fill="none" stroke="#4A9E2C" stroke-width="2.7" stroke-linejoin="round" stroke-linecap="round"/>
<circle cx="23.5" cy="25.5" r="1.3" fill="#E0601A"/><circle cx="27.2" cy="25.5" r="1.2" fill="#2A86E0"/><circle cx="23.5" cy="29.2" r="1.2" fill="#F4B040"/><circle cx="27.2" cy="29.2" r="1.2" fill="#5AAE3C"/>
<path d="M16 17.5 H21" stroke="#FFFFFF" stroke-width=".8" opacity=".45"/></svg>
</body></html>
